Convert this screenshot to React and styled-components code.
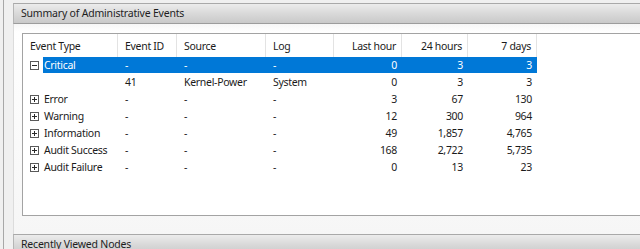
import React from "react";
import styled, { createGlobalStyle } from "styled-components";

const Global = createGlobalStyle`
  html, body { margin: 0; padding: 0; }
  body {
    background: #f0f0f0;
    overflow: hidden;
    font-family: "Noto Sans", "Open Sans", sans-serif;
    color: #1b1b1b;
  }
`;

const Outer = styled.div`
  margin-left: 3px;
  border-left: 1px solid #a8a8a8;
  padding: 3px 0 0 9px;
  height: 246px;
  width: 700px;
  overflow: hidden;
`;

const PaneHeader = styled.div`
  height: 19px;
  border-top: 1px solid #a9a9a9;
  border-left: 1px solid #b5b5b5;
  border-bottom: 1px solid #9c9c9c;
  background: linear-gradient(#ececec, #d9d9d9 50%, #c9c9c9);
  font-size: 10.5px;
  letter-spacing: -0.2px;
  line-height: 19px;
  padding-left: 7px;
  color: #1e1e1e;
`;

const PaneBody = styled.div`
  background: linear-gradient(#f6f6f6, #ffffff 8px, #f6f6f6 100%);
  border-left: 1px solid #dcdcdc;
  padding: 9px 0 18px 8px;
`;

const TableBox = styled.div`
  height: 181px;
  border: 1px solid #a3a3a3;
  border-right: none;
  background: #fff;
  font-size: 10.5px;
  letter-spacing: -0.3px;
`;

const cols = "95px 59px 89px 68px 68px 66px 69px";

const HeadRow = styled.div`
  display: grid;
  grid-template-columns: ${cols};
  height: 23px;
`;

const HeadCell = styled.div`
  border-right: 1px solid #e3e3e3;
  line-height: 24px;
  padding: ${(p) => (p.$right ? "0 5px 0 0" : "0 0 0 7px")};
  text-align: ${(p) => (p.$right ? "right" : "left")};
  white-space: nowrap;
`;

const Row = styled.div`
  display: grid;
  grid-template-columns: ${cols};
  height: 17px;
  line-height: 17px;
  position: relative;
  color: ${(p) => (p.$sel ? "#ffffff" : "#1b1b1b")};
`;

const SelBar = styled.div`
  position: absolute;
  left: 20px;
  top: 0;
  width: 494px;
  height: 16px;
  background: #0078d7;
  z-index: 0;
`;

const Cell = styled.div`
  position: relative;
  z-index: 1;
  white-space: nowrap;
  padding: ${(p) => (p.$right ? "0 5px 0 0" : "0 0 0 7px")};
  text-align: ${(p) => (p.$right ? "right" : "left")};
`;

const TypeCell = styled(Cell)`
  display: flex;
  align-items: center;
  gap: 5px;
`;

const Spacer = styled.span`
  width: 9px;
`;

const Expander = ({ open }) => (
  <svg width="9" height="9" viewBox="0 0 9 9">
    <rect x="0.5" y="0.5" width="8" height="8" fill="#fff" stroke="#5a5a5a" />
    <line x1="2" y1="4.5" x2="7" y2="4.5" stroke="#2a2a2a" />
    {!open && <line x1="4.5" y1="2" x2="4.5" y2="7" stroke="#2a2a2a" />}
  </svg>
);

const rows = [
  { type: "Critical", open: true, sel: true, id: "-", src: "-", log: "-", h: "0", d: "3", w: "3" },
  { type: "", child: true, id: "41", src: "Kernel-Power", log: "System", h: "0", d: "3", w: "3" },
  { type: "Error", id: "-", src: "-", log: "-", h: "3", d: "67", w: "130" },
  { type: "Warning", id: "-", src: "-", log: "-", h: "12", d: "300", w: "964" },
  { type: "Information", id: "-", src: "-", log: "-", h: "49", d: "1,857", w: "4,765" },
  { type: "Audit Success", id: "-", src: "-", log: "-", h: "168", d: "2,722", w: "5,735" },
  { type: "Audit Failure", id: "-", src: "-", log: "-", h: "0", d: "13", w: "23" },
];

export default function App() {
  return (
    <>
      <Global />
      <Outer>
        <PaneHeader>Summary of Administrative Events</PaneHeader>
        <PaneBody>
          <TableBox>
            <HeadRow>
              <HeadCell>Event Type</HeadCell>
              <HeadCell>Event ID</HeadCell>
              <HeadCell>Source</HeadCell>
              <HeadCell>Log</HeadCell>
              <HeadCell $right>Last hour</HeadCell>
              <HeadCell $right>24 hours</HeadCell>
              <HeadCell $right>7 days</HeadCell>
            </HeadRow>
            {rows.map((r, i) => (
              <Row key={i} $sel={r.sel}>
                {r.sel && <SelBar />}
                <TypeCell>
                  {r.child ? <Spacer /> : <Expander open={r.open} />}
                  <span>{r.type}</span>
                </TypeCell>
                <Cell>{r.id}</Cell>
                <Cell>{r.src}</Cell>
                <Cell>{r.log}</Cell>
                <Cell $right>{r.h}</Cell>
                <Cell $right>{r.d}</Cell>
                <Cell $right>{r.w}</Cell>
              </Row>
            ))}
          </TableBox>
        </PaneBody>
        <PaneHeader>Recently Viewed Nodes</PaneHeader>
      </Outer>
    </>
  );
}
